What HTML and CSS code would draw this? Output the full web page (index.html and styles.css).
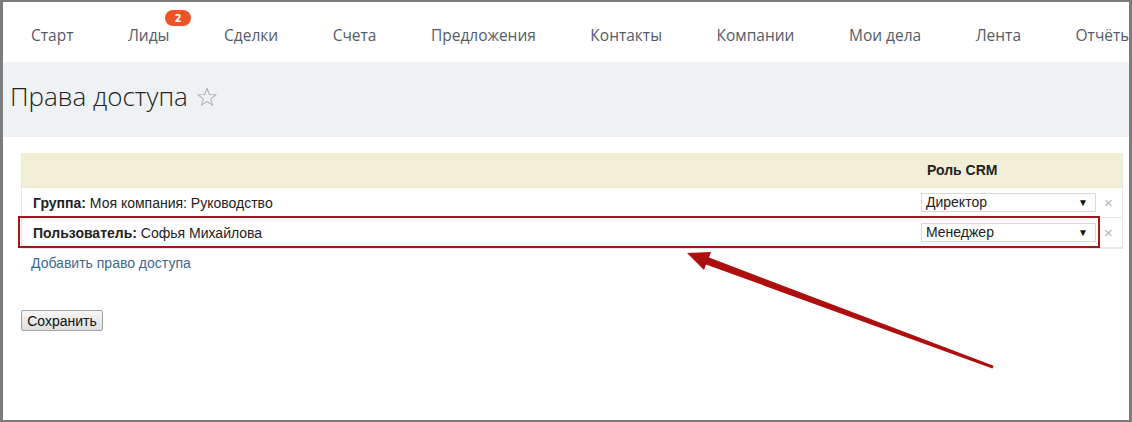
FILE: index.html
```html
<!DOCTYPE html>
<html lang="ru">
<head>
  <meta charset="utf-8">
  <title>Права доступа</title>
  <link rel="stylesheet" href="styles.css">
</head>
<body>
  <div class="frame">
    <nav class="topnav">
      <a class="nav-item" href="#">Старт</a>
      <a class="nav-item" href="#">Лиды<span class="badge">2</span></a>
      <a class="nav-item" href="#">Сделки</a>
      <a class="nav-item" href="#">Счета</a>
      <a class="nav-item" href="#">Предложения</a>
      <a class="nav-item" href="#">Контакты</a>
      <a class="nav-item" href="#">Компании</a>
      <a class="nav-item" href="#">Мои дела</a>
      <a class="nav-item" href="#">Лента</a>
      <a class="nav-item" href="#">Отчёты</a>
    </nav>

    <div class="title-bar">
      <h1 class="page-title">Права доступа</h1>
      <svg class="star" width="22" height="22" viewBox="0 0 24 24">
        <polygon points="12,2.5 14.6,9.3 21.8,9.5 16.1,14 18.1,21 12,16.9 5.9,21 7.9,14 2.2,9.5 9.4,9.3" fill="none" stroke="#b4b4b4" stroke-width="1.2" stroke-linejoin="round"/>
      </svg>
    </div>

    <div class="content">
      <div class="perm-table">
        <div class="row head">
          <div class="cell name"></div>
          <div class="cell role"><b>Роль CRM</b></div>
          <div class="cell del"></div>
        </div>
        <div class="row">
          <div class="cell name"><b>Группа:</b> Моя компания: Руководство</div>
          <div class="cell role"><div class="select">Директор<span class="arrow">&#9660;</span></div></div>
          <div class="cell del">&times;</div>
        </div>
        <div class="row">
          <div class="cell name"><b>Пользователь:</b> Софья Михайлова</div>
          <div class="cell role"><div class="select">Менеджер<span class="arrow">&#9660;</span></div></div>
          <div class="cell del">&times;</div>
        </div>
      </div>
      <a class="add-link" href="#">Добавить право доступа</a>
      <button class="save-btn">Сохранить</button>
    </div>

    <!-- annotation drawn over the screenshot -->
    <svg class="annot" width="1132" height="422" viewBox="0 0 1132 422">
      <rect x="19" y="217" width="1080" height="30" fill="none" stroke="#a3161b" stroke-width="2"/>
      <polygon points="687,253 711,252 709,257.5 993.6,365.8 992.4,368.4 706,264.6 704,270" fill="#ad0f0f"/>
    </svg>
  </div>
</body>
</html>
```

FILE: styles.css
```css
body {
  margin: 0;
  background: #fff;
}
.frame {
  position: relative;
  box-sizing: border-box;
  width: 1132px;
  height: 422px;
  border: solid #7c7c7c;
  border-width: 2px 3px;
  overflow: hidden;
  font-family: "Liberation Sans", Arial, sans-serif;
  font-size: 14px;
  color: #222;
}
.topnav {
  display: flex;
  gap: 54.5px;
  height: 60px;
  box-sizing: border-box;
  padding: 23px 0 0 28px;
  white-space: nowrap;
  font-family: "Open Sans", sans-serif;
  font-size: 15.5px;
  line-height: 20px;
}
.nav-item {
  position: relative;
  color: #535c69;
  text-decoration: none;
}
.badge {
  position: absolute;
  left: 37px;
  top: -15px;
  width: 26px;
  height: 16px;
  border-radius: 8px;
  background: #ef5429;
  color: #fff;
  font-size: 11px;
  font-weight: bold;
  line-height: 16px;
  text-align: center;
}
.title-bar {
  display: flex;
  align-items: flex-start;
  height: 75px;
  box-sizing: border-box;
  padding: 18px 0 0 7px;
  background: #eef2f4;
}
.page-title {
  margin: 0;
  font-family: "Open Sans", sans-serif;
  font-weight: 300;
  font-size: 26px;
  line-height: 32px;
  color: #222;
}
.star {
  margin: 6px 0 0 8px;
}
.content {
  display: flex;
  flex-direction: column;
  align-items: flex-start;
  padding: 16px 6px 0 18px;
}
.perm-table {
  width: 1102px;
  box-sizing: border-box;
  border: 1px solid #e6e6e6;
  border-top: none;
}
.row {
  display: grid;
  grid-template-columns: 1fr 182px 24px;
  height: 30px;
  box-sizing: border-box;
  border-bottom: 1px solid #e6e6e6;
  align-items: center;
}
.row.head {
  height: 35px;
  background: #f3efd7;
  border-bottom-color: #ebe7d0;
}
.cell.name {
  padding-left: 11px;
}
.cell.role {
  padding-left: 5px;
}
.head .cell.role {
  padding-left: 11px;
}
.cell.del {
  color: #b4b4b4;
  font-size: 15px;
  padding-left: 6px;
}
.select {
  position: relative;
  width: 175px;
  height: 19px;
  box-sizing: border-box;
  border: 1px solid #d9d9d9;
  padding-left: 4px;
  line-height: 17px;
  background: #fff;
}
.arrow {
  position: absolute;
  right: 7px;
  top: 0;
  font-size: 10px;
  color: #111;
}
.add-link {
  margin: 6px 0 0 10px;
  color: #3b6a96;
  text-decoration: none;
  line-height: 16px;
}
.save-btn {
  margin-top: 39px;
  width: 82px;
  height: 21px;
  padding: 0;
  border: 1px solid #a3a3a3;
  border-radius: 2px;
  background: linear-gradient(#f6f6f6, #dedede);
  font-family: "Liberation Sans", Arial, sans-serif;
  font-size: 14px;
  color: #111;
}
.annot {
  position: absolute;
  left: -3px;
  top: -2px;
  pointer-events: none;
}
```
